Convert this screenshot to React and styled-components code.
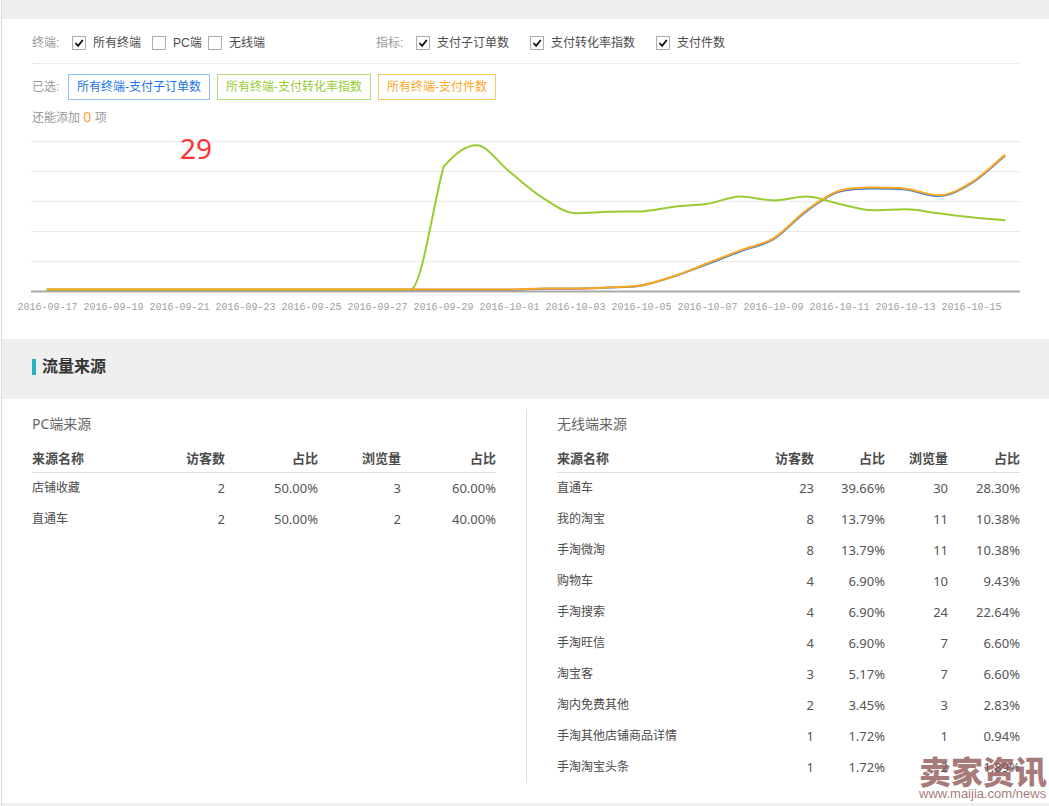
import React from 'react';
import styled, { createGlobalStyle } from 'styled-components';

const GlobalStyle = createGlobalStyle`
  * {
    box-sizing: border-box;
  }

  body {
    margin: 0;
    background: #fff;
    color: #4c4c4c;
    font: 12px/20px 'Liberation Sans', 'Noto Sans CJK SC', sans-serif;
  }
`;

const Page = styled.main`
  position: relative;
  margin-left: 1px;
  border-left: 1px solid #d5d8de;
  overflow: hidden;
`;

const Band = styled.div`
  height: ${({ $height }) => $height}px;
  background: #efefef;
`;

const Panel = styled.section`
  padding: 0 29px 27px 30px;
`;

const FilterBar = styled.div`
  display: grid;
  grid-template-columns: 344px 1fr;
  align-items: center;
  height: 45px;
  padding-top: 4px;
  border-bottom: 1px dotted #dcdcdc;
`;

const FilterGroup = styled.fieldset`
  display: grid;
  grid-template-columns: ${({ $columns }) => $columns};
  align-items: center;
  margin: 0;
  padding: 0;
  border: 0;
  white-space: nowrap;
`;

const Label = styled.span`
  color: #999;
`;

const Option = styled.label`
  display: flex;
  align-items: center;
  gap: 7px;
`;

const Checkbox = styled.input`
  appearance: none;
  width: 14px;
  height: 14px;
  margin: 0;
  border: 1px solid #adadad;
  background: #fff;

  &:checked {
    background: url("data:image/svg+xml,%3Csvg xmlns='http://www.w3.org/2000/svg' viewBox='0 0 12 12'%3E%3Cpath d='M2.5 6l2.6 2.8L9.8 3' fill='none' stroke='%23111' stroke-width='1.8'/%3E%3C/svg%3E");
  }
`;

const SelectedBar = styled.div`
  display: grid;
  grid-template-columns: 36px 1fr;
  align-items: center;
  padding-top: 10px;
`;

const TagList = styled.div`
  display: flex;
  gap: 7px;
`;

const Tag = styled.button`
  height: 26px;
  padding: 0 8px;
  border: 1px solid ${({ $border }) => $border};
  background: #fff;
  color: ${({ $color }) => $color};
  font: inherit;
`;

const Remaining = styled.p`
  margin: 7px 0 0;
  color: #999;

  strong {
    color: #ff9c35;
    font: 14px/20px 'Noto Sans', sans-serif;
  }
`;

const Chart = styled.svg`
  display: block;
  width: 100%;
  height: auto;
  margin-top: 12px;
  overflow: visible;
`;

const AxisLabel = styled.text`
  fill: #a0a0a0;
  font: 10px 'Liberation Mono', monospace;
  text-anchor: middle;
`;

const Note = styled.text`
  fill: #f33;
  font: 28px 'Noto Sans', sans-serif;
`;

const SectionHeader = styled.header`
  display: flex;
  align-items: center;
  height: 60px;
  padding: 0 30px 4px;
  background: #efefef;
`;

const SectionTitle = styled.h2`
  margin: 0;
  padding-left: 6px;
  border-left: 4px solid #26b3c0;
  color: #333;
  font-size: 16px;
  line-height: 16px;
`;

const Sources = styled.div`
  display: grid;
  grid-template-columns: 495fr 493fr;
  padding: 10px 29px 20px 30px;
`;

const Source = styled.section`
  min-height: 374px;
  padding: 0 ${({ $first }) => ($first ? '30px' : '0')} 0
    ${({ $first }) => ($first ? '0' : '30px')};
  border-right: ${({ $first }) => ($first ? '1px solid #dcdcdc' : '0')};
`;

const SourceTitle = styled.h3`
  margin: 0;
  padding-top: 5px;
  color: #666;
  font: 14px/20px 'Noto Sans', 'Noto Sans CJK SC', sans-serif;
`;

const Table = styled.table`
  width: 100%;
  margin-top: 8px;
  border-collapse: collapse;
  table-layout: fixed;
`;

const HeadCell = styled.th`
  width: ${({ $width }) => ($width ? `${$width}px` : 'auto')};
  height: 30px;
  padding: 4px 0 0;
  border-bottom: 1px solid #dcdcdc;
  font-size: 13px;
  line-height: 20px;
  text-align: ${({ $width }) => ($width ? 'right' : 'left')};
`;

const NameCell = styled.td`
  height: 31px;
  padding: 0;
  white-space: nowrap;
`;

const NumberCell = styled.td`
  padding: 0;
  color: #555;
  font: 13px/20px 'Noto Sans', sans-serif;
  text-align: right;
`;

const Watermark = styled.div`
  position: absolute;
  right: 0;
  bottom: 3px;
  width: 130px;
  color: #8b5050;
  opacity: 0.75;
  white-space: nowrap;
`;

const WatermarkName = styled.div`
  font: 900 32px/30px 'Noto Sans CJK SC', sans-serif;
`;

const WatermarkUrl = styled.div`
  font: 13px/18px 'Liberation Sans', sans-serif;
`;

const terminals = [
  { name: '所有终端', checked: true },
  { name: 'PC端' },
  { name: '无线端' },
];

const metrics = ['支付子订单数', '支付转化率指数', '支付件数'];

const tags = [
  { name: '所有终端-支付子订单数', color: '#1a73e8', border: '#8fc0f7' },
  { name: '所有终端-支付转化率指数', color: '#99cc33', border: '#b5dc7c' },
  { name: '所有终端-支付件数', color: '#ffa51f', border: '#ffc862' },
];

const dates = [
  '2016-09-17', '2016-09-19', '2016-09-21', '2016-09-23', '2016-09-25',
  '2016-09-27', '2016-09-29', '2016-10-01', '2016-10-03', '2016-10-05',
  '2016-10-07', '2016-10-09', '2016-10-11', '2016-10-13', '2016-10-15',
];

const STEP = 33;
const FIRST_X = 15.5;

const rate = [
  ...Array(12).fill(149.5),
  27, 5.3, 31.7, 57.7, 73.2, 71.7, 71.4, 66.7, 63.8, 56.4, 60.4, 56.4, 64,
  70.3, 69.3, 73.3, 77.2, 80.3,
];

const items = [
  ...Array(15).fill(149.5),
  148.6, 148.5, 147.4, 145.2, 136, 123.2, 110.4, 98.3, 70.3, 50.7, 47.6, 48.7,
  55.3, 42.3, 15.4,
];

const orders = items.map((y, i) => (i > 19 ? y + 0.8 : y + 0.2));

// rise per step on both sides of a point; flat at peaks and valleys
const slopes = (values, i) => {
  const before = values[i] - values[i - 1];
  const after = values[i + 1] - values[i];

  if (i === 0) return [after, after];
  if (i === values.length - 1) return [before, before];
  if (before * after <= 0) return [0, 0];
  if (Math.abs(before - after) > 90) return [before, after * 1.8];

  const mean = (before + after) / 2;
  const limit = 3 * Math.min(Math.abs(before), Math.abs(after));
  const slope = Math.sign(mean) * Math.min(Math.abs(mean), limit);
  return [slope, slope];
};

const spline = (values) =>
  values.reduce((d, y, i) => {
    const x = FIRST_X + i * STEP;
    if (i === 0) return `M${x} ${y}`;

    const out = values[i - 1] + slopes(values, i - 1)[1] / 3;
    const into = y - slopes(values, i)[0] / 3;
    return `${d}C${x - 22} ${out} ${x - 11} ${into} ${x} ${y}`;
  }, '');

const pcSource = {
  title: 'PC端来源',
  widths: [93, 83, 95],
  rows: [
    ['店铺收藏', '2', '50.00%', '3', '60.00%'],
    ['直通车', '2', '50.00%', '2', '40.00%'],
  ],
};

const wirelessSource = {
  title: '无线端来源',
  widths: [71, 63, 72],
  rows: [
    ['直通车', '23', '39.66%', '30', '28.30%'],
    ['我的淘宝', '8', '13.79%', '11', '10.38%'],
    ['手淘微淘', '8', '13.79%', '11', '10.38%'],
    ['购物车', '4', '6.90%', '10', '9.43%'],
    ['手淘搜索', '4', '6.90%', '24', '22.64%'],
    ['手淘旺信', '4', '6.90%', '7', '6.60%'],
    ['淘宝客', '3', '5.17%', '7', '6.60%'],
    ['淘内免费其他', '2', '3.45%', '3', '2.83%'],
    ['手淘其他店铺商品详情', '1', '1.72%', '1', '0.94%'],
    ['手淘淘宝头条', '1', '1.72%', '2', '1.89%'],
  ],
};

const TrendChart = () => (
  <Chart viewBox="0 0 988 172" role="img" aria-label="趋势图">
    {[0, 30, 60, 90, 120].map((y) => (
      <path key={y} d={`M-1 ${y + 1.5}H988`} stroke="#ebebeb" />
    ))}
    <g fill="none" strokeWidth="2" strokeLinecap="round" strokeLinejoin="round">
      <path d="M-1 151.5H988" stroke="#aaa" strokeLinecap="butt" />
      <path d={spline(orders)} stroke="#2f7ed8" />
      <path d={spline(rate)} stroke="#99cc33" />
      <path d={spline(items)} stroke="#ffa51f" />
    </g>
    {dates.map((date, i) => (
      <AxisLabel key={date} x={FIRST_X + i * STEP * 2} y="170">{date}</AxisLabel>
    ))}
    <Note x="148" y="19">29</Note>
  </Chart>
);

const SourceTable = ({ source, first }) => (
  <Source $first={first}>
    <SourceTitle>{source.title}</SourceTitle>
    <Table>
      <thead>
        <tr>
          <HeadCell>来源名称</HeadCell>
          <HeadCell $width={70}>访客数</HeadCell>
          <HeadCell $width={source.widths[0]}>占比</HeadCell>
          <HeadCell $width={source.widths[1]}>浏览量</HeadCell>
          <HeadCell $width={source.widths[2]}>占比</HeadCell>
        </tr>
      </thead>
      <tbody>
        {source.rows.map(([name, ...numbers]) => (
          <tr key={name}>
            <NameCell>{name}</NameCell>
            {numbers.map((number, i) => (
              <NumberCell key={i}>{number}</NumberCell>
            ))}
          </tr>
        ))}
      </tbody>
    </Table>
  </Source>
);

const App = () => (
  <>
    <GlobalStyle />
    <Page>
      <Band $height={19} />
      <Panel>
        <FilterBar>
          <FilterGroup $columns="40px 80px 56px auto" aria-label="终端">
            <Label>终端:</Label>
            {terminals.map(({ name, checked }) => (
              <Option key={name}>
                <Checkbox type="checkbox" defaultChecked={checked} />
                {name}
              </Option>
            ))}
          </FilterGroup>
          <FilterGroup $columns="40px 114px 126px auto" aria-label="指标">
            <Label>指标:</Label>
            {metrics.map((name) => (
              <Option key={name}>
                <Checkbox type="checkbox" defaultChecked />
                {name}
              </Option>
            ))}
          </FilterGroup>
        </FilterBar>
        <SelectedBar>
          <Label>已选:</Label>
          <TagList>
            {tags.map(({ name, color, border }) => (
              <Tag key={name} type="button" $color={color} $border={border}>{name}</Tag>
            ))}
          </TagList>
        </SelectedBar>
        <Remaining>还能添加 <strong>0</strong> 项</Remaining>
        <TrendChart />
      </Panel>
      <SectionHeader>
        <SectionTitle>流量来源</SectionTitle>
      </SectionHeader>
      <Sources>
        <SourceTable source={pcSource} first />
        <SourceTable source={wirelessSource} />
      </Sources>
      <Watermark>
        <WatermarkName>卖家资讯</WatermarkName>
        <WatermarkUrl>www.maijia.com/news</WatermarkUrl>
      </Watermark>
      <Band $height={3} />
    </Page>
  </>
);

export default App;
